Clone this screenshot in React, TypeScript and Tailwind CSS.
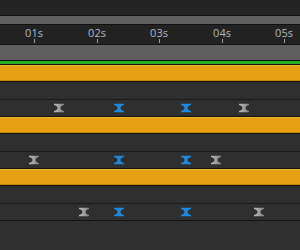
import React from "react";

type Key = { x: number; blue: boolean };

const ticks = [
  { label: "01s", x: 34 },
  { label: "02s", x: 97 },
  { label: "03s", x: 159 },
  { label: "04s", x: 222 },
  { label: "05s", x: 284 },
];

const groups: Key[][] = [
  [
    { x: 59, blue: false },
    { x: 119, blue: true },
    { x: 186, blue: true },
    { x: 244, blue: false },
  ],
  [
    { x: 34, blue: false },
    { x: 119, blue: true },
    { x: 186, blue: true },
    { x: 216, blue: false },
  ],
  [
    { x: 84, blue: false },
    { x: 119, blue: true },
    { x: 186, blue: true },
    { x: 259, blue: false },
  ],
];

const Keyframe: React.FC<Key> = ({ x, blue }) => (
  <svg
    width="10"
    height="9"
    viewBox="0 0 10 9"
    className="absolute top-1/2 -translate-y-1/2"
    style={{ left: x - 5 }}
  >
    <defs>
      <linearGradient id="kg" x1="0" x2="1" y1="0" y2="0">
        <stop offset="0" stopColor="#bdbdbd" />
        <stop offset="1" stopColor="#808080" />
      </linearGradient>
    </defs>
    <path
      d="M0 0 H10 V1.5 Q6.5 2.5 6.5 4.5 Q6.5 6.5 10 7.5 V9 H0 V7.5 Q3.5 6.5 3.5 4.5 Q3.5 2.5 0 1.5 Z"
      fill={blue ? "#1e88dc" : "url(#kg)"}
    />
  </svg>
);

const Bar = () => (
  <div className="h-[16px] bg-[#e6a012] border-t border-t-[#f0b42e] border-b border-b-[#c48809]" />
);

const Group: React.FC<{ keys: Key[] }> = ({ keys }) => (
  <div className="flex flex-col">
    <Bar />
    <div className="h-[1px] bg-[#131313]" />
    <div className="h-[17px] bg-[#2f2f2f]" />
    <div className="h-[1px] bg-[#1a1a1a]" />
    <div className="relative h-[16px] bg-[#2f2f2f]">
      {keys.map((k, i) => (
        <Keyframe key={i} {...k} />
      ))}
    </div>
    <div className="h-[1px] bg-[#131313]" />
  </div>
);

export default function App() {
  return (
    <div
      className="w-[300px] h-[250px] overflow-hidden bg-[#2f2f2f] flex flex-col"
      style={{ fontFamily: '"Open Sans", "DejaVu Sans", sans-serif' }}
    >
      <div className="h-[15px] bg-[#232323]" />
      <div className="h-[1px] bg-[#111]" />
      <div className="h-[8px] bg-[#5f5f5f]" />
      <div className="h-[1px] bg-[#111]" />
      <div className="relative h-[19px] bg-[#222]">
        {ticks.map((t) => (
          <div key={t.label}>
            <span
              className="absolute top-[1px] -translate-x-1/2 text-[11px] leading-[14px] text-[#b0bac4]"
              style={{ left: t.x }}
            >
              {t.label}
            </span>
            <div
              className="absolute bottom-[1px] w-[1px] h-[4px] bg-[#9aa2aa]"
              style={{ left: t.x }}
            />
          </div>
        ))}
      </div>
      <div className="h-[1px] bg-[#111]" />
      <div className="h-[15px] bg-[#5f5f5f]" />
      <div className="h-[1px] bg-[#111]" />
      <div className="h-[3px] bg-[#27ae24]" />
      <div className="h-[1px] bg-[#151515]" />
      {groups.map((g, i) => (
        <Group key={i} keys={g} />
      ))}
    </div>
  );
}
